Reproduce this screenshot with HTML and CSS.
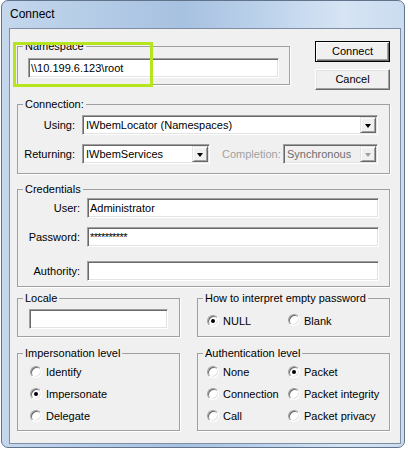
FILE: index.html
```html
<!DOCTYPE html>
<html>
<head>
<meta charset="utf-8">
<title>Connect</title>
<link rel="stylesheet" href="styles.css">
</head>
<body>
<div class="window">
  <div class="titlebar">Connect</div>
  <div class="client">
    <div class="top-row">
      <fieldset class="group ns">
        <legend>Namespace</legend>
        <div class="edit ns-edit">\\10.199.6.123\root</div>
      </fieldset>
      <div class="buttons">
        <div class="btn default">Connect</div>
        <div class="btn">Cancel</div>
      </div>
    </div>

    <fieldset class="group conn">
      <legend>Connection:</legend>
      <div class="row">
        <span class="lbl conn-lbl">Using:</span>
        <div class="combo using"><span class="val">IWbemLocator (Namespaces)</span><span class="drop"></span></div>
      </div>
      <div class="row">
        <span class="lbl conn-lbl">Returning:</span>
        <div class="combo returning"><span class="val">IWbemServices</span><span class="drop"></span></div>
        <span class="lbl-disabled">Completion:</span>
        <div class="combo completion disabled"><span class="val">Synchronous</span><span class="drop"></span></div>
      </div>
    </fieldset>

    <fieldset class="group cred">
      <legend>Credentials</legend>
      <div class="row">
        <span class="lbl cred-lbl">User:</span>
        <div class="edit cred-edit">Administrator</div>
      </div>
      <div class="row">
        <span class="lbl cred-lbl">Password:</span>
        <div class="edit cred-edit pwd">**********</div>
      </div>
      <div class="row row-wide">
        <span class="lbl cred-lbl">Authority:</span>
        <div class="edit cred-edit"></div>
      </div>
    </fieldset>

    <div class="pair pair-a">
      <fieldset class="group locale">
        <legend>Locale</legend>
        <div class="edit locale-edit"></div>
      </fieldset>
      <fieldset class="group howto">
        <legend>How to interpret empty password</legend>
        <div class="radio-grid two">
          <div class="opt"><span class="radio on"></span>NULL</div>
          <div class="opt raise"><span class="radio"></span>Blank</div>
        </div>
      </fieldset>
    </div>

    <div class="pair pair-b">
      <fieldset class="group imp">
        <legend>Impersonation level</legend>
        <div class="radio-col">
          <div class="opt"><span class="radio"></span>Identify</div>
          <div class="opt"><span class="radio on"></span>Impersonate</div>
          <div class="opt"><span class="radio"></span>Delegate</div>
        </div>
      </fieldset>
      <fieldset class="group auth">
        <legend>Authentication level</legend>
        <div class="radio-grid two rows">
          <div class="opt"><span class="radio"></span>None</div>
          <div class="opt"><span class="radio on"></span>Packet</div>
          <div class="opt"><span class="radio"></span>Connection</div>
          <div class="opt"><span class="radio"></span>Packet integrity</div>
          <div class="opt"><span class="radio"></span>Call</div>
          <div class="opt"><span class="radio"></span>Packet privacy</div>
        </div>
      </fieldset>
    </div>

    <div class="highlight"></div>
  </div>
</div>
</body>
</html>
```

FILE: styles.css
```css
* { box-sizing: border-box; }

html, body {
  margin: 0;
  padding: 0;
  background: #fff;
}

body {
  width: 408px;
  height: 449px;
  overflow: hidden;
  font-family: "Liberation Sans", Arial, sans-serif;
  font-size: 11px;
  color: #000;
}

.window {
  margin-left: 1px;
  width: 404px;
  height: 448px;
  border: 1px solid #62748c;
  border-radius: 7px;
  display: flex;
  flex-direction: column;
  background:
    linear-gradient(90deg, #c4d7ed 0%, #b3cbe6 25%, #a7c1e0 45%, #bcd2eb 65%, #d6e4f4 85%, #cadcf0 100%);
}

.titlebar {
  height: 27px;
  padding: 6px 0 0 8px;
  font-size: 12px;
  line-height: 15px;
  color: #000;
}

.client {
  position: relative;
  margin: 0 3px 3px 7px;
  height: 416px;
  border: 1px solid #7e8ea3;
  background: #f0f0f0;
  padding: 11px 10px 0 7px;
}

/* group boxes: horizontal insets live on the content, so legends stay at 5px */
.group {
  margin: 0;
  padding: 0;
  min-width: 0;
  border: 1px solid #a0a0a0;
  box-shadow: 1px 1px 0 #fff;
}

.group legend {
  margin-left: 5px;
  padding: 0 2px;
  height: 13px;
  line-height: 13px;
}

/* top row */
.top-row {
  display: flex;
  align-items: flex-start;
  height: 50px;
}

.ns {
  width: 273px;
  padding: 5px 0 6px;
}

.ns-edit {
  width: 251px;
  margin-left: 10px;
}

.buttons {
  margin-left: auto;
  margin-top: 1px;
  display: flex;
  flex-direction: column;
  gap: 7px;
}

.btn {
  width: 75px;
  height: 21px;
  line-height: 19px;
  text-align: center;
  background: #f0f0f0;
  border: 1px solid;
  border-color: #fff #696969 #696969 #fff;
  box-shadow: inset -1px -1px 0 #a0a0a0, inset 1px 1px 0 #e3e3e3;
}

.btn.default {
  border: 1px solid #000;
  box-shadow: inset 1px 1px 0 #fff, inset -1px -1px 0 #696969, inset -2px -2px 0 #a0a0a0;
}

/* edit & combo */
.edit {
  height: 20px;
  background: #fff;
  border: 1px solid;
  border-color: #a0a0a0 #fff #fff #a0a0a0;
  box-shadow: inset 1px 1px 0 #696969, inset -1px -1px 0 #e3e3e3;
  padding: 1px 0 0 2px;
  line-height: 16px;
  white-space: nowrap;
  overflow: hidden;
}

.pwd {
  letter-spacing: -0.6px;
}

.combo {
  display: flex;
  height: 20px;
  background: #fff;
  border: 1px solid;
  border-color: #a0a0a0 #fff #fff #a0a0a0;
  box-shadow: inset 1px 1px 0 #696969, inset -1px -1px 0 #e3e3e3;
  padding: 1px;
}

.combo .val {
  flex: 1;
  padding-left: 2px;
  line-height: 16px;
  white-space: nowrap;
  overflow: hidden;
}

.combo .drop {
  width: 16px;
  height: 16px;
  flex: none;
  display: flex;
  align-items: center;
  justify-content: center;
  background: #f0f0f0;
  border: 1px solid;
  border-color: #e3e3e3 #696969 #696969 #e3e3e3;
  box-shadow: inset 1px 1px 0 #fff, inset -1px -1px 0 #a0a0a0;
}

.combo .drop::after {
  content: "";
  width: 0;
  height: 0;
  border-left: 3.5px solid transparent;
  border-right: 3.5px solid transparent;
  border-top: 4px solid #000;
  margin-top: 1px;
}

.combo.disabled {
  background: #f0f0f0;
}

.combo.disabled .val {
  color: #6d6d6d;
}

.combo.disabled .drop::after {
  border-top-color: #a0a0a0;
}

/* connection */
.conn {
  margin-top: 8px;
  padding: 4px 0 9px;
}

.row {
  display: flex;
  align-items: center;
  height: 20px;
}

.row + .row {
  margin-top: 9px;
}

.row.row-wide {
  margin-top: 14px;
}

.lbl {
  text-align: right;
  margin-right: 7px;
  flex: none;
}

.conn-lbl { width: 57px; }

.using { width: 296px; }
.returning { width: 128px; }

.lbl-disabled {
  width: 54px;
  margin-left: 12px;
  margin-right: 7px;
  color: #a0a0a0;
}

.completion { width: 95px; }

/* credentials */
.cred {
  margin-top: 9px;
  padding: 2px 0 5px;
}

.cred-lbl { width: 62px; }
.cred-edit { width: 292px; }

/* lower pairs */
.pair {
  display: flex;
  gap: 17px;
}

.pair-a { margin-top: 5px; }
.pair-b { margin-top: 10px; }

.locale {
  width: 163px;
  padding: 4px 0 7px;
}

.locale-edit {
  width: 139px;
  margin-left: 11px;
}

.howto {
  flex: 1;
  padding: 6px 0 0;
}

.howto .radio-grid {
  margin-left: 9px;
}

.imp {
  width: 163px;
  padding: 1px 0 3px;
}

.imp .radio-col {
  margin-left: 12px;
}

.auth {
  flex: 1;
  padding: 1px 0 3px;
}

.auth .radio-grid {
  margin-left: 9px;
}

.radio-grid.two {
  display: grid;
  grid-template-columns: 81px auto;
  grid-auto-rows: 20px;
}

.radio-grid.rows {
  grid-auto-rows: 22px;
}

.radio-col {
  display: grid;
  grid-auto-rows: 22px;
}

.opt {
  display: flex;
  align-items: center;
  gap: 4px;
  white-space: nowrap;
}

.opt.raise .radio {
  margin-top: -3px;
}

.radio {
  flex: none;
  width: 12px;
  height: 12px;
  border-radius: 50%;
  background: #fff;
  border: 1px solid;
  border-color: #a0a0a0 #fff #fff #a0a0a0;
  box-shadow: inset 1px 1px 0 #696969, inset -1px -1px 0 #e3e3e3;
  display: flex;
  align-items: center;
  justify-content: center;
}

.radio.on::after {
  content: "";
  width: 4px;
  height: 4px;
  border-radius: 50%;
  background: #000;
}

/* annotation overlay */
.highlight {
  position: absolute;
  left: 3px;
  top: 13px;
  width: 140px;
  height: 45px;
  border: 3px solid #b5e61d;
}
```
